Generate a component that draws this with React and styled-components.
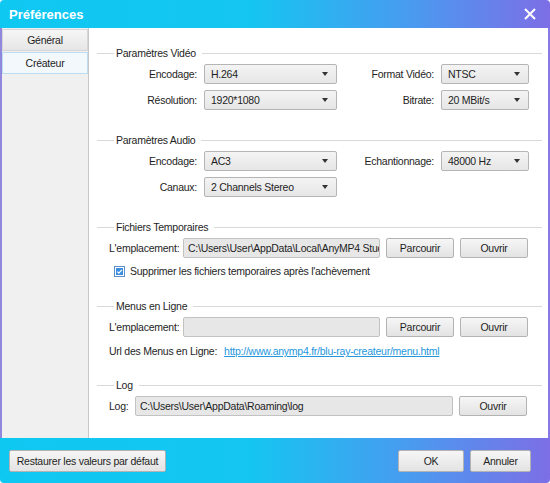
import styled, { createGlobalStyle } from "styled-components"

const GlobalStyle = createGlobalStyle`
  html, body {
    margin: 0;
    padding: 0;
    background: #fff;
  }
  body {
    font-family: "Liberation Sans", Arial, sans-serif;
    font-size: 10.5px;
    letter-spacing: -0.25px;
    color: #1e1e1e;
  }
`

// Outer dialog frame
const Window = styled.div`
  width: 550px;
  height: 483px;
  display: flex;
  flex-direction: column;
  border-radius: 4px;
  overflow: hidden;
  background: linear-gradient(to right, #0fc8f2 0%, #14c6f1 45%, #4a9af0 75%, #7d6ee6 100%);
`

const TitleBar = styled.div`
  height: 28px;
  display: flex;
  align-items: center;
  justify-content: space-between;
  padding: 0 14px 0 9px;
  color: #fff;
  font-weight: bold;
  font-size: 13px;
  letter-spacing: 0;
`

const CloseButton = styled.div`
  width: 12px;
  height: 12px;
  display: flex;
`

const Body = styled.div`
  flex: 1;
  display: flex;
  background: #fff;
  border-left: 2px solid #8f88dc;
  border-right: 2px solid #8678e6;
`

const Sidebar = styled.div`
  width: 86px;
  background: #f0f0f0;
  border-right: 1px solid #c9c9c9;
  display: flex;
  flex-direction: column;
  padding-top: 1px;
`

const TabItem = styled.div`
  height: 20px;
  display: flex;
  align-items: center;
  justify-content: center;
  margin-bottom: 1px;
  border: 1px solid ${p => (p.$active ? "#bcdcf2" : "#d6d6d6")};
  background: ${p => (p.$active ? "#f3f8fd" : "linear-gradient(#f6f6f6, #e6e6e6)")};
`

const Content = styled.div`
  flex: 1;
  padding: 18px 6px 0 8px;
  display: flex;
  flex-direction: column;
`

const Group = styled.div`
  display: flex;
  flex-direction: column;
  margin-bottom: ${p => p.$gap || 0}px;
`

const GroupHeader = styled.div`
  display: flex;
  align-items: center;
  height: 14px;
  margin-bottom: 4px;
  &::before {
    content: "";
    width: 17px;
    border-top: 1px solid #d9d9d9;
    margin-right: 2px;
  }
  &::after {
    content: "";
    flex: 1;
    border-top: 1px solid #d9d9d9;
    margin-left: 6px;
  }
`

const FieldGrid = styled.div`
  display: grid;
  grid-template-columns: 100px 133px 1fr 88px;
  column-gap: 7px;
  row-gap: 6px;
  padding-right: 13px;
  align-items: center;
`

const Label = styled.span`
  text-align: right;
  white-space: nowrap;
`

const Select = styled.div`
  height: 18px;
  border: 1px solid #b5b5b5;
  border-radius: 2px;
  background: linear-gradient(#f4f4f4, #e6e6e6);
  display: flex;
  align-items: center;
  justify-content: space-between;
  padding: 0 8px 0 6px;
  &::after {
    content: "";
    border-left: 3.5px solid transparent;
    border-right: 3.5px solid transparent;
    border-top: 4px solid #333;
  }
`

const Row = styled.div`
  display: flex;
  align-items: center;
  gap: 6px;
  padding-left: 12px;
  height: 20px;
`

const RowLabel = styled.span`
  width: ${p => p.$width}px;
  white-space: nowrap;
  flex-shrink: 0;
`

const PathInput = styled.div`
  width: ${p => p.$width}px;
  height: 18px;
  flex-shrink: 0;
  box-sizing: content-box;
  border: 1px solid #c2c2c2;
  border-radius: 2px;
  background: #e7e7e7;
  display: flex;
  align-items: center;
  padding: 0 4px;
  white-space: nowrap;
  overflow: hidden;
`

const Button = styled.div`
  width: ${p => p.$width || 66}px;
  height: ${p => p.$height || 18}px;
  border: 1px solid #b3b3b3;
  border-radius: 2px;
  background: linear-gradient(#f6f6f6, #e3e3e3);
  display: flex;
  align-items: center;
  justify-content: center;
  white-space: nowrap;
  flex-shrink: 0;
`

const CheckRow = styled.label`
  display: flex;
  align-items: center;
  gap: 5px;
  padding-left: 17px;
  margin-top: 6px;
  height: 14px;
`

const CheckBox = styled.span`
  width: 9px;
  height: 9px;
  border: 1px solid #5c8fc8;
  background: #fff;
  display: flex;
  align-items: center;
  justify-content: center;
  svg { display: block; }
`

const UrlRow = styled.div`
  display: flex;
  align-items: center;
  gap: 7px;
  padding-left: 12px;
  margin-top: 7px;
  height: 14px;
`

const Link = styled.span`
  color: #2497dc;
  text-decoration: underline;
`

const Footer = styled.div`
  height: 45px;
  display: flex;
  align-items: center;
  justify-content: space-between;
  padding: 0 19px 0 9px;
  box-sizing: border-box;
`

const FooterRight = styled.div`
  display: flex;
  gap: 6px;
`

const App = () => {
    return (
        <>
            <GlobalStyle />
            <Window>
                <TitleBar>
                    Préférences
                    <CloseButton>
                        <svg width="12" height="12" viewBox="0 0 12 12">
                            <path d="M1 1L11 11M11 1L1 11" stroke="#fff" strokeWidth="2" />
                        </svg>
                    </CloseButton>
                </TitleBar>
                <Body>
                    <Sidebar>
                        <TabItem>Général</TabItem>
                        <TabItem $active>Créateur</TabItem>
                    </Sidebar>
                    <Content>
                        <Group $gap={23}>
                            <GroupHeader>Paramètres Vidéo</GroupHeader>
                            <FieldGrid>
                                <Label>Encodage:</Label>
                                <Select>H.264</Select>
                                <Label>Format Vidéo:</Label>
                                <Select>NTSC</Select>
                                <Label>Résolution:</Label>
                                <Select>1920*1080</Select>
                                <Label>Bitrate:</Label>
                                <Select>20 MBit/s</Select>
                            </FieldGrid>
                        </Group>
                        <Group $gap={23}>
                            <GroupHeader>Paramètres Audio</GroupHeader>
                            <FieldGrid>
                                <Label>Encodage:</Label>
                                <Select>AC3</Select>
                                <Label>Echantionnage:</Label>
                                <Select>48000 Hz</Select>
                                <Label>Canaux:</Label>
                                <Select>2 Channels Stereo</Select>
                            </FieldGrid>
                        </Group>
                        <Group $gap={21}>
                            <GroupHeader>Fichiers Temporaires</GroupHeader>
                            <Row>
                                <RowLabel $width={68}>L'emplacement:</RowLabel>
                                <PathInput $width={187}>C:\Users\User\AppData\Local\AnyMP4 Studio</PathInput>
                                <Button>Parcourir</Button>
                                <Button>Ouvrir</Button>
                            </Row>
                            <CheckRow>
                                <CheckBox>
                                    <svg width="7" height="7" viewBox="0 0 7 7">
                                        <rect width="7" height="7" fill="#3b8de0" />
                                        <path d="M1.3 3.6L2.8 5.1L5.8 1.8" stroke="#fff" strokeWidth="1.2" fill="none" />
                                    </svg>
                                </CheckBox>
                                Supprimer les fichiers temporaires après l'achèvement
                            </CheckRow>
                        </Group>
                        <Group $gap={20}>
                            <GroupHeader>Menus en Ligne</GroupHeader>
                            <Row>
                                <RowLabel $width={68}>L'emplacement:</RowLabel>
                                <PathInput $width={187} />
                                <Button>Parcourir</Button>
                                <Button>Ouvrir</Button>
                            </Row>
                            <UrlRow>
                                <span>Url des Menus en Ligne:</span>
                                <Link>http://www.anymp4.fr/blu-ray-createur/menu.html</Link>
                            </UrlRow>
                        </Group>
                        <Group>
                            <GroupHeader>Log</GroupHeader>
                            <Row>
                                <RowLabel $width={20}>Log:</RowLabel>
                                <PathInput $width={308}>C:\Users\User\AppData\Roaming\log</PathInput>
                                <Button>Ouvrir</Button>
                            </Row>
                        </Group>
                    </Content>
                </Body>
                <Footer>
                    <Button $width={155} $height={20}>Restaurer les valeurs par défaut</Button>
                    <FooterRight>
                        <Button $width={64} $height={20}>OK</Button>
                        <Button $width={59} $height={20}>Annuler</Button>
                    </FooterRight>
                </Footer>
            </Window>
        </>
    )
}

export default App
